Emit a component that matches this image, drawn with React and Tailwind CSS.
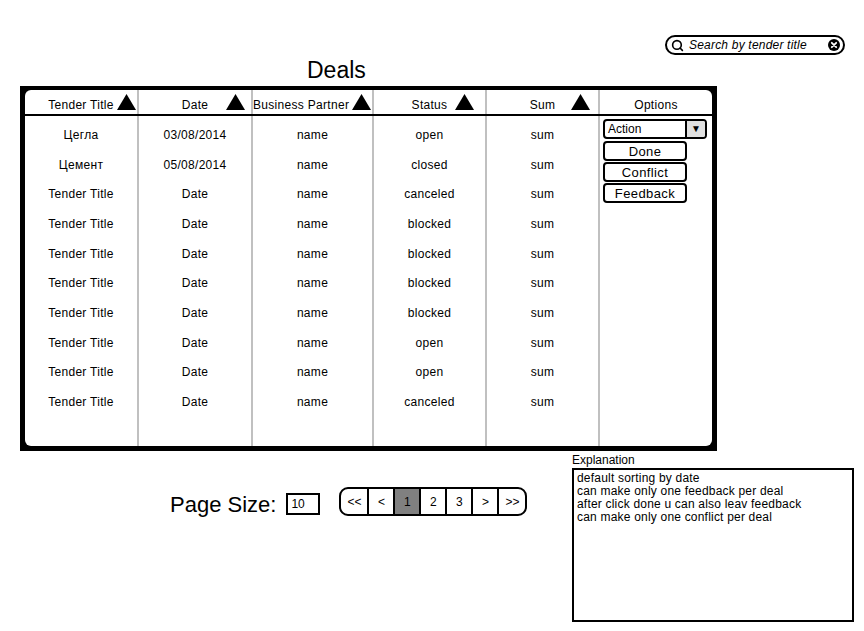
import React from 'react';
import { Search } from 'lucide-react';

const rows = [
  ['Цегла', '03/08/2014', 'name', 'open', 'sum'],
  ['Цемент', '05/08/2014', 'name', 'closed', 'sum'],
  ['Tender Title', 'Date', 'name', 'canceled', 'sum'],
  ['Tender Title', 'Date', 'name', 'blocked', 'sum'],
  ['Tender Title', 'Date', 'name', 'blocked', 'sum'],
  ['Tender Title', 'Date', 'name', 'blocked', 'sum'],
  ['Tender Title', 'Date', 'name', 'blocked', 'sum'],
  ['Tender Title', 'Date', 'name', 'open', 'sum'],
  ['Tender Title', 'Date', 'name', 'open', 'sum'],
  ['Tender Title', 'Date', 'name', 'canceled', 'sum'],
];

const notes = [
  'default sorting by date',
  'can make only one feedback per deal',
  'after click done u can also leav feedback',
  'can make only one conflict per deal',
];

// sort arrow in the header cells
const SortArrow = ({ className }) => (
  <svg width="19" height="16" viewBox="0 0 19 16" className={`absolute top-[4px] ${className}`}>
    <polygon points="9.5,0 19,16 0,16" fill="#000" />
  </svg>
);

const ClearIcon = () => (
  <svg width="12" height="12" viewBox="0 0 12 12">
    <circle cx="6" cy="6" r="6" fill="#000" />
    <path d="M3.8 3.8 L8.2 8.2 M8.2 3.8 L3.8 8.2" stroke="#fff" strokeWidth="1.8" strokeLinecap="round" />
  </svg>
);

const OptionButton = ({ label }) => (
  <div className="w-[84px] h-[20px] border-2 border-black rounded-[4px] flex items-center justify-center text-[13px] tracking-[0.4px] leading-none">
    {label}
  </div>
);

export default function App() {
  return (
    <div className="w-[864px] h-[631px] bg-white text-black overflow-hidden font-['Liberation_Sans',Arial,sans-serif]">
      {/* search */}
      <div className="flex justify-end pt-[35px] pr-[19px]">
        <div className="w-[180px] h-[20px] border-2 border-black rounded-full flex items-center pl-[4px] pr-[3px]">
          <Search size={13} strokeWidth={3} className="shrink-0" />
          <span className="ml-[5px] italic text-[12px] tracking-[0.2px] leading-none flex-1">Search by tender title</span>
          <ClearIcon />
        </div>
      </div>

      {/* title */}
      <div className="ml-[307px] mt-[2px] text-[23px] leading-[26px]">Deals</div>

      {/* table */}
      <div className="ml-[20px] mt-[3px] w-[697px] h-[365px] bg-black pt-[4px] px-[5px] pb-[5px]">
        <div className="h-full bg-white rounded-[6px] flex flex-col text-[12px] tracking-[0.3px]">
          <div className="grid grid-cols-[112px_114px_121px_113px_113px_114px] h-[26px] border-b-2 border-black leading-[14px]">
            <div className="relative flex items-end justify-center pb-[2px]">
              Tender Title
              <SortArrow className="right-[1px]" />
            </div>
            <div className="relative flex items-end justify-center pb-[2px] border-l-2 border-[#c0c0c0]">
              Date
              <SortArrow className="right-[6px]" />
            </div>
            <div className="relative flex items-end pb-[2px] border-l-2 border-[#c0c0c0]">
              Business Partner
              <SortArrow className="right-[1px]" />
            </div>
            <div className="relative flex items-end justify-center pb-[2px] border-l-2 border-[#c0c0c0]">
              Status
              <SortArrow className="right-[11px]" />
            </div>
            <div className="relative flex items-end justify-center pb-[2px] border-l-2 border-[#c0c0c0]">
              Sum
              <SortArrow className="right-[8px]" />
            </div>
            <div className="flex items-end justify-center pb-[2px] border-l-2 border-[#c0c0c0]">Options</div>
          </div>

          <div className="flex-1 grid grid-cols-[112px_114px_121px_113px_113px_114px]">
            {[0, 1, 2, 3, 4].map((c) => (
              <div key={c} className={`pt-[4px] ${c > 0 ? 'border-l-2 border-[#c0c0c0]' : ''}`}>
                {rows.map((r, i) => (
                  <div key={i} className="h-[29.7px] flex items-center justify-center">
                    {r[c]}
                  </div>
                ))}
              </div>
            ))}
            <div className="border-l-2 border-[#c0c0c0] pt-[3px] pl-[3px] flex flex-col gap-[1px]">
              <div className="w-[104px] h-[20px] border-2 border-black rounded-[4px] flex overflow-hidden mb-[1px]">
                <span className="flex-1 pl-[3px] flex items-center leading-none tracking-normal">Action</span>
                <span className="w-[20px] border-l-2 border-black bg-[#e0e0e0] flex items-center justify-center text-[10px] leading-none">▼</span>
              </div>
              <OptionButton label="Done" />
              <OptionButton label="Conflict" />
              <OptionButton label="Feedback" />
            </div>
          </div>
        </div>
      </div>

      {/* bottom */}
      <div className="flex mt-[2px]">
        <div className="w-[572px] pl-[170px] pt-[34px] flex items-start">
          <span className="mt-[5px] text-[22px] leading-[25px]">Page Size:</span>
          <div className="ml-[10px] mt-[6px] w-[34px] h-[22px] border-2 border-black flex items-center pl-[3px] text-[12px] leading-none">
            10
          </div>
          <div className="ml-[19px] h-[29px] border-2 border-black rounded-[9px] flex overflow-hidden text-[12px] leading-none">
            <div className="w-[26px] flex items-center justify-center">&lt;&lt;</div>
            <div className="w-[26px] border-l-2 border-black flex items-center justify-center">&lt;</div>
            <div className="w-[26px] border-l-2 border-black bg-[#808080] flex items-center justify-center">1</div>
            <div className="w-[26px] border-l-2 border-black flex items-center justify-center">2</div>
            <div className="w-[26px] border-l-2 border-black flex items-center justify-center">3</div>
            <div className="w-[26px] border-l-2 border-black flex items-center justify-center">&gt;</div>
            <div className="w-[28px] border-l-2 border-black flex items-center justify-center">&gt;&gt;</div>
          </div>
        </div>
        <div className="w-[282px] flex flex-col">
          <span className="text-[12px] leading-[14px]">Explanation</span>
          <div className="mt-[1px] h-[154px] border-2 border-black pt-[2px] pl-[3px] text-[12px] leading-[13px] tracking-[0.2px]">
            {notes.map((n) => (
              <div key={n}>{n}</div>
            ))}
          </div>
        </div>
      </div>
    </div>
  );
}
